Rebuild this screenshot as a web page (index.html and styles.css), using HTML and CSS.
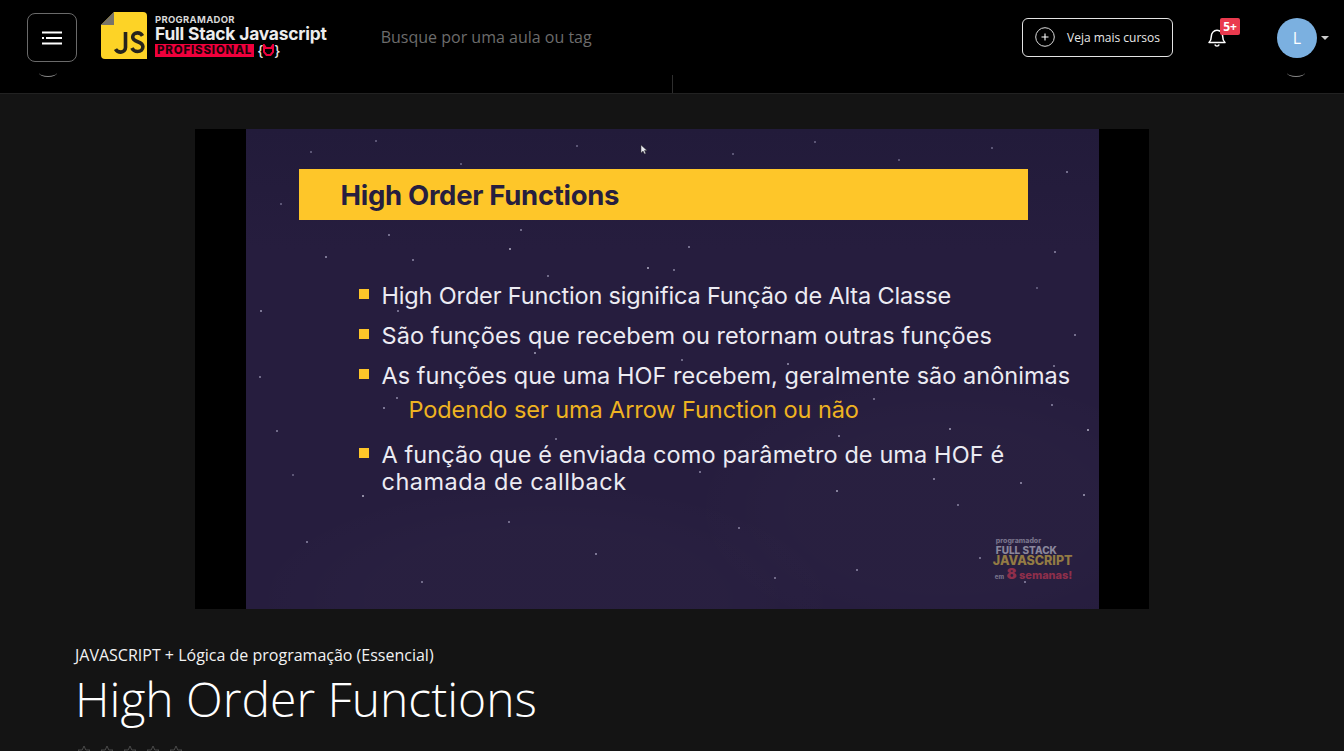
FILE: index.html
```html
<!DOCTYPE html>
<html lang="pt-BR">
<head>
<meta charset="utf-8">
<title>High Order Functions</title>
<link rel="stylesheet" href="styles.css">
</head>
<body>
<header class="topbar">
  <span class="peek peek-left"></span>
  <span class="peek peek-right"></span>
  <span class="peek-line"></span>
  <button class="menu-btn" aria-label="Menu">
    <svg width="20" height="14" viewBox="0 0 20 14"><path d="M0 1.500h20M4 7h16M0 12.500h20" stroke="#fff" stroke-width="2" fill="none"/><rect x="0" y="6" width="2" height="2" fill="#fff"/></svg>
  </button>
  <div class="logo">
    <svg class="logo-mark" width="46" height="47" viewBox="0 0 46 47">
      <path d="M13 0H42a4 4 0 0 1 4 4V47H4a4 4 0 0 1-4-4V13Z" fill="#fdd326"/>
      <path d="M13 0V13H0Z" fill="#77736a"/>
      <path d="M24.500 20v15.500a4.600 4.600 0 0 1-4.700 4.600c-2.500 0-4.200-1.100-5.300-3M41.500 23.800c-1-1.800-2.700-2.900-5-2.900-2.800 0-4.800 1.700-4.800 4.100 0 5.800 10.200 3.600 10.200 9.700 0 2.800-2.200 4.800-5.300 4.800-2.600 0-4.600-1.300-5.700-3.500" fill="none" stroke="#26241c" stroke-width="3.600"/>
    </svg>
    <div class="logo-text">
      <span class="logo-top">PROGRAMADOR</span>
      <span class="logo-main">Full Stack Javascript</span>
      <span class="logo-row"><span class="logo-tag">PROFISSIONAL</span><span class="logo-brace">{<svg width="11" height="12" viewBox="0 0 11 12"><path d="M1 1l2 3h5l2-3v7l-2.500 3h-4L1 8Z" fill="none" stroke="#f0003c" stroke-width="2"/></svg>}</span></span>
    </div>
  </div>
  <div class="search">Busque por uma aula ou tag</div>
  <button class="more-btn">
    <svg width="20" height="20" viewBox="0 0 20 20"><circle cx="10" cy="10" r="9.300" fill="none" stroke="#ddd" stroke-width="1"/><path d="M10 6.500v7M6.500 10h7" stroke="#fff" stroke-width="1.100"/></svg>
    <span>Veja mais cursos</span>
  </button>
  <div class="bell">
    <svg width="18" height="20" viewBox="0 0 18 20"><path d="M1 15.500c1.700-1.500 2.300-3 2.300-6 0-3.400 2.300-6.200 5.700-6.200s5.700 2.800 5.700 6.200c0 3 .6 4.500 2.300 6Z" fill="none" stroke="#fff" stroke-width="1.500" stroke-linejoin="round"/><path d="M6.800 17.500a2.300 2.300 0 0 0 4.400 0" fill="none" stroke="#fff" stroke-width="1.400"/></svg>
    <span class="badge">5+</span>
  </div>
  <div class="user">
    <span class="avatar">L</span>
    <span class="caret"></span>
  </div>
</header>

<main class="content">
  <section class="player">
    <div class="slide">
      <svg class="cursor" width="8" height="12" viewBox="0 0 8 12"><path d="M1 1v8l2-2 1.500 3 1.300-.6L4.500 6.500H7Z" fill="#e8e8ee" stroke="#333" stroke-width=".5"/></svg>
      <h2 class="slide-title">High Order Functions</h2>
      <ul class="slide-list">
        <li class="item item-1">High Order Function significa Função de Alta Classe</li>
        <li class="item item-2">São funções que recebem ou retornam outras funções</li>
        <li class="item item-3">As funções que uma HOF recebem, geralmente são anônimas</li>
        <li class="sub">Podendo ser uma Arrow Function ou não</li>
        <li class="item item-4">A função que é enviada como parâmetro de uma HOF é<br><span class="wide">chamada de callback</span></li>
      </ul>
      <div class="mark">
        <span class="mark-a">programador</span>
        <span class="mark-b">FULL STACK</span>
        <span class="mark-c">JAVASCRIPT</span>
        <span class="mark-d"><small>em</small> <b>8</b> semanas!</span>
      </div>
    </div>
  </section>
  <section class="lesson">
    <p class="course">JAVASCRIPT + Lógica de programação (Essencial)</p>
    <h1 class="lesson-title">High Order Functions</h1>
    <div class="rating">
      <svg width="14" height="14" viewBox="0 0 14 14"><path d="M7 1l1.800 4H13l-3.300 3 1 4.500L7 10.200 3.300 12.500l1-4.500L1 5h4.200Z" fill="none" stroke="#4a4a4a"/></svg>
      <svg width="14" height="14" viewBox="0 0 14 14"><path d="M7 1l1.800 4H13l-3.300 3 1 4.500L7 10.200 3.300 12.500l1-4.500L1 5h4.200Z" fill="none" stroke="#4a4a4a"/></svg>
      <svg width="14" height="14" viewBox="0 0 14 14"><path d="M7 1l1.800 4H13l-3.300 3 1 4.500L7 10.200 3.300 12.500l1-4.500L1 5h4.200Z" fill="none" stroke="#4a4a4a"/></svg>
      <svg width="14" height="14" viewBox="0 0 14 14"><path d="M7 1l1.800 4H13l-3.300 3 1 4.500L7 10.200 3.300 12.500l1-4.500L1 5h4.200Z" fill="none" stroke="#4a4a4a"/></svg>
      <svg width="14" height="14" viewBox="0 0 14 14"><path d="M7 1l1.800 4H13l-3.300 3 1 4.500L7 10.200 3.300 12.500l1-4.500L1 5h4.200Z" fill="none" stroke="#4a4a4a"/></svg>
    </div>
  </section>
</main>
</body>
</html>
```

FILE: styles.css
```css
* { box-sizing: border-box; }
html, body { margin: 0; height: 751px; overflow: hidden; background: #141414; }
body { font-family: "Open Sans", sans-serif; color: #fff; }

.topbar {
  position: relative;
  display: flex;
  align-items: center;
  height: 94px;
  padding: 0 15px 19px 27px;
  background: #000;
  border-bottom: 1px solid #222;
}
.peek { position: absolute; top: 73px; width: 18px; height: 4px; border-bottom: 1px solid #888; border-radius: 0 0 50% 50% / 0 0 100% 100%; }
.peek-left { left: 39px; }
.peek-right { left: 1287px; }
.peek-line { position: absolute; left: 672px; top: 75px; width: 1px; height: 18px; background: #2e2e2e; }

.menu-btn {
  display: flex; align-items: center; justify-content: center;
  width: 50px; height: 49px; padding: 0; margin-top: 1px;
  background: #000; border: 1px solid #6a6a6a; border-radius: 8px;
}
.logo { display: flex; gap: 8px; margin-left: 24px; padding-bottom: 4px; align-items: flex-start; }
.logo-text { display: flex; flex-direction: column; font-family: Inter, sans-serif; font-weight: 700; }
.logo-top { font-size: 9.500px; line-height: 11px; letter-spacing: .3px; color: #d8d8d8; margin-top: 2px; }
.logo-main { font-size: 17.400px; line-height: 18px; color: #ececec; letter-spacing: -.2px; }
.logo-row { display: flex; align-items: center; gap: 3px; height: 15px; }
.logo-tag { background: #f0003c; color: #1c0209; font-size: 11.500px; line-height: 13px; padding: 0 2px; letter-spacing: .8px; font-weight: 800; }
.logo-brace { display: flex; align-items: center; font-size: 14px; color: #e8e8e8; font-weight: 500; }

.search { margin-left: 54px; font-size: 16px; color: #6c6c6c; }

.more-btn {
  display: flex; align-items: center; gap: 12px;
  margin-left: auto; width: 151px; height: 39px; padding: 0 0 0 12px;
  background: #000; color: #e8e8e8;
  border: 1px solid #e4e4e4; border-radius: 6px;
  font: 400 12px "Open Sans", sans-serif;
}
.bell { position: relative; display: flex; margin-left: 35px; width: 18px; }
.badge {
  position: absolute; left: 12px; top: -9px;
  width: 20px; height: 17px; border-radius: 2px;
  background: #ea3a4e; color: #fff;
  font: 700 12px/17px "Open Sans", sans-serif; text-align: center;
}
.user { display: flex; align-items: center; gap: 4px; margin: 1px 0 0 51px; }
.avatar {
  display: flex; align-items: center; justify-content: center;
  width: 40px; height: 40px; border-radius: 50%;
  background: #7bb0e0; color: #fff; font-size: 16px;
}
.caret { width: 0; height: 0; border: 4px solid transparent; border-top: 4px solid #ccc; border-bottom: 0; }

.content { display: flex; flex-direction: column; }
.player { align-self: center; display: flex; justify-content: center; width: 954px; height: 480px; margin-top: 35px; background: #000; }
.slide {
  position: relative;
  width: 853px; height: 480px;
  padding: 40px 0 0 53px;
  color: #ecebf2;
  font-family: Inter, sans-serif;
  background-color: #261d3e;
  background-image:
    radial-gradient(ellipse 260px 140px at 700px 380px, rgba(255,255,255,.012) 0 60%, transparent 100%),
    radial-gradient(ellipse 300px 120px at 300px 470px, rgba(255,255,255,.012) 0 60%, transparent 100%),
    linear-gradient(#221b3a, #261d3e 25%);
}
.slide::before {
  content: "";
  position: absolute; left: 0; top: 0;
  width: 2px; height: 2px; border-radius: 50%;
  background: transparent;
  box-shadow:
    142px 105px #8f8aa8, 263px 119px #b5b1c6, 79px 127px #9a95b2, 166px 130px #8f8aa8, 401px 138px #b5b1c6,
    301px 146px #8a85a2, 274px 100px #8a85a2, 442px 117px #8f8aa8, 427px 140px #8a85a2, 151px 181px #8f8aa8,
    841px 300px #b5b1c6, 703px 299px #a5a1ba, 592px 306px #9a95b2, 590px 361px #a5a1ba, 687px 349px #9a95b2,
    774px 353px #9a95b2, 837px 365px #a5a1ba, 805px 275px #8f8aa8, 627px 269px #8a85a2, 711px 375px #8a85a2,
    807px 236px #8a85a2, 541px 234px #9a95b2, 288px 223px #a5a1ba, 137px 278px #9a95b2, 435px 230px #8a85a2,
    116px 366px #b5b1c6, 453px 342px #8f8aa8, 309px 309px #8a85a2, 150px 268px #8f8aa8, 14px 181px #9a95b2,
    30px 301px #8a85a2, 60px 412px #8f8aa8, 175px 452px #8a85a2, 262px 392px #8a85a2, 349px 424px #9a95b2,
    492px 398px #8a85a2, 528px 448px #8a85a2, 610px 440px #8f8aa8, 733px 428px #8a85a2, 778px 452px #8f8aa8,
    64px 22px #6f6a8a, 129px 11px #6f6a8a, 214px 34px #6f6a8a, 330px 16px #6f6a8a, 486px 24px #6f6a8a,
    568px 12px #6f6a8a, 652px 30px #6f6a8a, 745px 18px #6f6a8a, 820px 42px #8f8aa8, 34px 74px #6f6a8a,
    808px 122px #8f8aa8, 790px 158px #6f6a8a, 828px 205px #8f8aa8, 13px 247px #8a85a2, 46px 345px #6f6a8a;
}
.cursor { position: absolute; left: 394px; top: 15px; }
.slide-title {
  position: relative;
  display: flex; align-items: center;
  width: 729px; height: 51px; margin: 0; padding: 1px 0 0 42px;
  background: #fec629; color: #271e3f;
  font-size: 27.500px; font-weight: 700; letter-spacing: -.3px;
}
.slide-list { position: relative; list-style: none; margin: 0; padding: 0 0 0 83px; font-size: 23.500px; }
.item { position: relative; line-height: 27px; }
.item::before { content: ""; position: absolute; left: -23px; top: 7px; width: 10px; height: 10px; background: #fec629; }
.item-1 { margin-top: 62px; letter-spacing: -.16px; }
.item-2 { margin-top: 13px; letter-spacing: .06px; }
.item-3 { margin-top: 13px; letter-spacing: .03px; }
.sub { margin: 7px 0 0 27px; line-height: 27px; color: #eeb321; letter-spacing: -.08px; }
.item-4 { margin-top: 18px; letter-spacing: .1px; }
.wide { letter-spacing: .5px; }
.mark {
  position: absolute; right: 26px; bottom: 26px;
  display: flex; flex-direction: column; align-items: flex-start;
  font-weight: 800;
}
.mark-a { font-size: 7px; line-height: 8px; color: #77728a; margin-left: 3px; }
.mark-b { font-size: 10px; line-height: 10px; color: #8b879c; margin-left: 3px; }
.mark-c { font-size: 12.500px; line-height: 12px; color: #937b44; }
.mark-d { font-size: 11px; line-height: 13px; color: #8e2f4b; margin-left: 2px; }
.mark-d b { font-size: 15px; line-height: 13px; }
.mark-d small { font-size: 6px; color: #77728a; }

.lesson { padding: 36px 0 0 75px; }
.course { margin: 0; font-size: 16px; line-height: 20px; color: #f2f2f2; }
.lesson-title { margin: 5px 0 0; font-size: 48px; font-weight: 300; line-height: 58px; color: #fff; }
.rating { display: flex; gap: 9px; margin: 17px 0 0 2px; }
```
